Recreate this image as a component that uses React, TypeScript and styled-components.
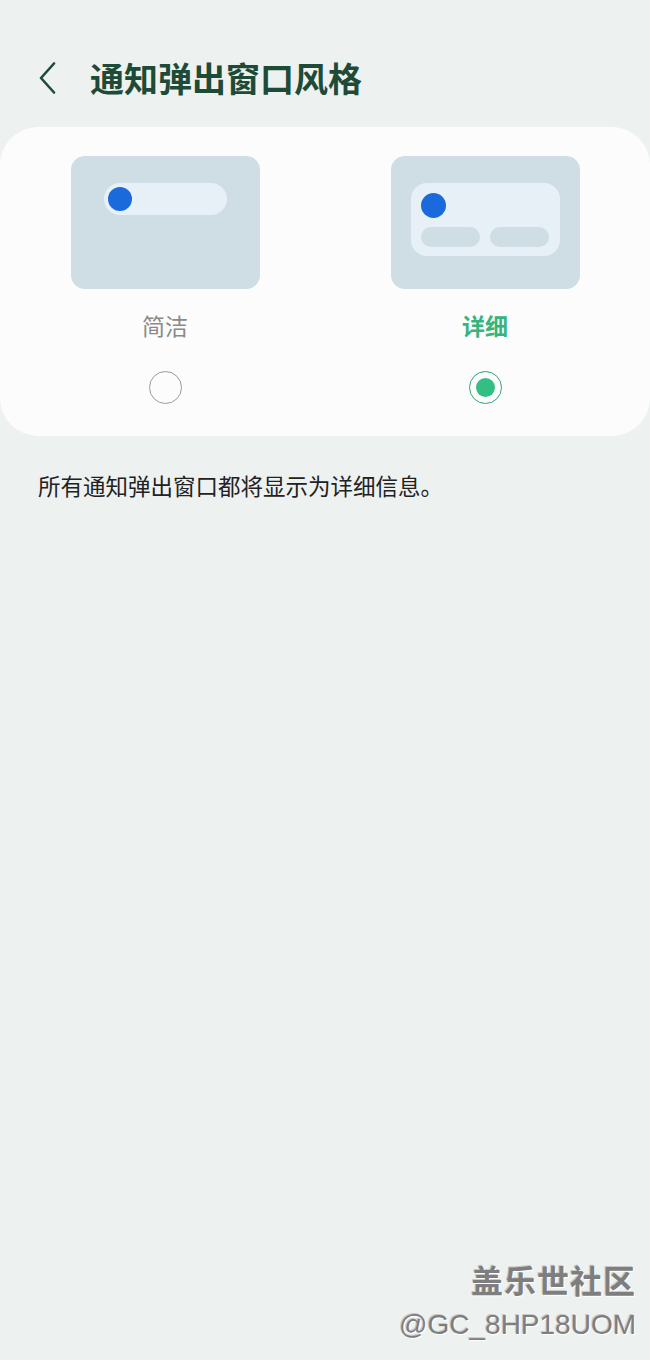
import styled, { createGlobalStyle, css } from "styled-components";

const GlobalStyle = createGlobalStyle`
  html, body {
    margin: 0;
    padding: 0;
    background: #edf1f0;
  }
  body {
    font-family: "Noto Sans CJK SC", "Noto Sans", sans-serif;
  }
  * {
    box-sizing: border-box;
  }
`;

const Page = styled.div`
  position: relative;
  width: 650px;
  height: 1360px;
  background: #edf1f0;
  overflow: hidden;
`;

const Header = styled.div`
  display: flex;
  align-items: center;
  height: 127px;
  padding: 28px 0 0 38px;
`;

const BackButton = styled.div`
  width: 24px;
  height: 36px;
  display: flex;
  align-items: center;
  margin-right: 28px;
`;

const Title = styled.h1`
  margin: 0;
  font-size: 34px;
  line-height: 44px;
  font-weight: 700;
  color: #1d4b37;
`;

const Card = styled.div`
  display: grid;
  grid-template-columns: 320px 320px;
  padding: 29px 5px 32px;
  background: #fcfcfc;
  border-radius: 38px;
`;

const Option = styled.div`
  display: flex;
  flex-direction: column;
  align-items: center;
`;

const Preview = styled.div<{ detailed?: boolean }>`
  width: 189px;
  height: 133px;
  border-radius: 14px;
  background: #cfdde4;
  display: flex;
  ${(p) =>
    p.detailed
      ? css`
          padding: 27px 20px 0;
        `
      : css`
          padding: 27px 33px 0;
        `}
`;

const Pill = styled.div`
  width: 123px;
  height: 32px;
  border-radius: 16px;
  background: #e8f0f7;
  display: flex;
  align-items: center;
  padding-left: 4px;
`;

const Dot = styled.div<{ size: number }>`
  width: ${(p) => p.size}px;
  height: ${(p) => p.size}px;
  border-radius: 50%;
  background: #1a6adb;
`;

const DetailBox = styled.div`
  width: 149px;
  height: 73px;
  border-radius: 16px;
  background: #e8f0f7;
  padding: 10px 10px 0 10px;
  display: flex;
  flex-direction: column;
`;

const Bars = styled.div`
  display: flex;
  gap: 10px;
  margin-top: 9px;
`;

const Bar = styled.div`
  width: 59px;
  height: 20px;
  border-radius: 10px;
  background: #cfdde4;
`;

const Label = styled.div<{ active?: boolean }>`
  margin-top: 21px;
  font-size: 23px;
  line-height: 30px;
  font-weight: ${(p) => (p.active ? 700 : 400)};
  color: ${(p) => (p.active ? "#35b47c" : "#8a8a8a")};
`;

const Radio = styled.div<{ checked?: boolean }>`
  margin-top: 31px;
  width: 33px;
  height: 33px;
  border-radius: 50%;
  border: 1.8px solid ${(p) => (p.checked ? "#3a9e72" : "#9a9a9a")};
  display: flex;
  align-items: center;
  justify-content: center;
`;

const RadioDot = styled.div`
  width: 19px;
  height: 19px;
  border-radius: 50%;
  background: #33bf83;
`;

const Description = styled.p`
  margin: 34px 0 0 38px;
  font-size: 22.5px;
  line-height: 30px;
  color: #222;
`;

const Watermark = styled.div`
  position: absolute;
  right: 14px;
  bottom: 17px;
  display: flex;
  flex-direction: column;
  align-items: flex-end;
  color: #7e7e7e;
  text-shadow: 1px 1px 0 #fff, -1px -1px 0 #c8c8c8;
`;

const WatermarkTitle = styled.div`
  font-size: 32px;
  line-height: 40px;
  font-weight: 700;
  letter-spacing: 1px;
  margin-bottom: 8px;
`;

const WatermarkId = styled.div`
  font-family: "Liberation Sans", Arial, sans-serif;
  font-size: 28px;
  line-height: 36px;
`;

export default function App() {
  return (
    <>
      <GlobalStyle />
      <Page>
        <Header>
          <BackButton>
            <svg width="20" height="32" viewBox="0 0 20 32" fill="none">
              <path
                d="M16 1.5 L3 16 L16 30.5"
                stroke="#1d4b37"
                strokeWidth="2.6"
                strokeLinecap="round"
                strokeLinejoin="round"
              />
            </svg>
          </BackButton>
          <Title>通知弹出窗口风格</Title>
        </Header>
        <Card>
          <Option>
            <Preview>
              <Pill>
                <Dot size={24} />
              </Pill>
            </Preview>
            <Label>简洁</Label>
            <Radio />
          </Option>
          <Option>
            <Preview detailed>
              <DetailBox>
                <Dot size={25} />
                <Bars>
                  <Bar />
                  <Bar />
                </Bars>
              </DetailBox>
            </Preview>
            <Label active>详细</Label>
            <Radio checked>
              <RadioDot />
            </Radio>
          </Option>
        </Card>
        <Description>所有通知弹出窗口都将显示为详细信息。</Description>
        <Watermark>
          <WatermarkTitle>盖乐世社区</WatermarkTitle>
          <WatermarkId>@GC_8HP18UOM</WatermarkId>
        </Watermark>
      </Page>
    </>
  );
}
